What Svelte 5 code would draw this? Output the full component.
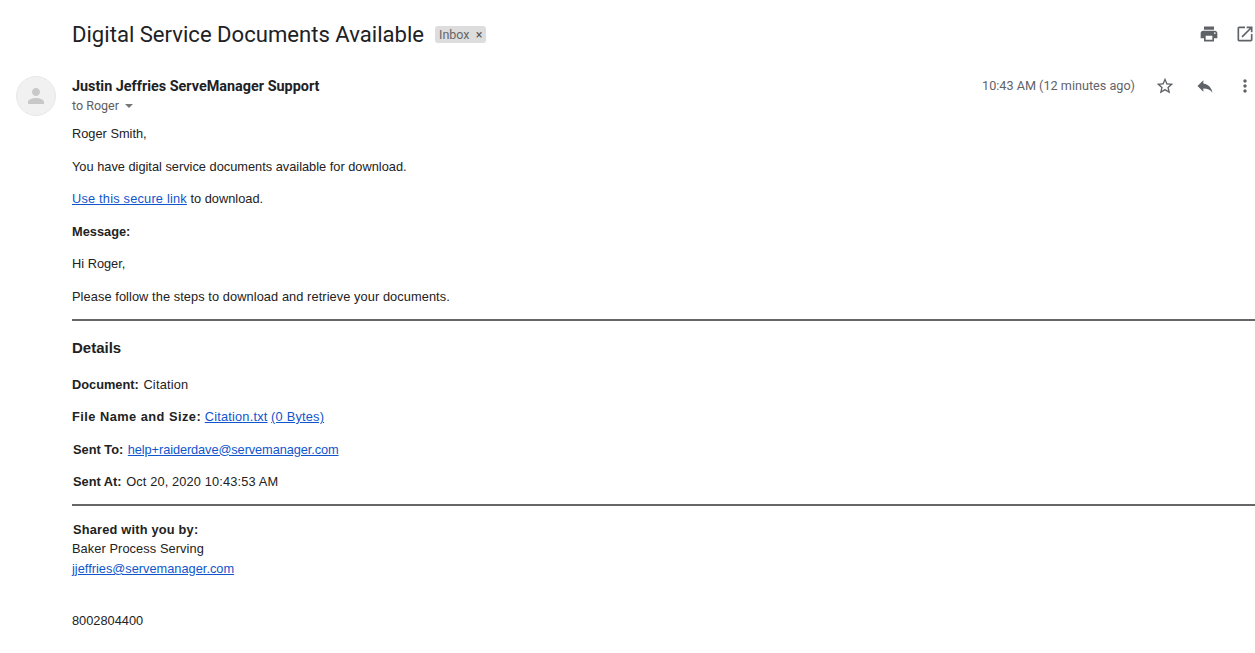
<script>
	// Gmail message view: subject row, sender row, then the HTML mail body
	const details = [
		{ label: 'Document:', text: 'Citation' }
	];
</script>

<div class="page">
	<header class="subject">
		<h1 class="title">Digital Service Documents Available</h1>
		<span class="label">Inbox <span class="x">×</span></span>
		<div class="spacer"></div>
		<svg class="icon" viewBox="0 0 24 24" width="20" height="20"><path d="M19 8H5c-1.66 0-3 1.34-3 3v6h4v4h12v-4h4v-6c0-1.66-1.34-3-3-3zm-3 11H8v-5h8v5zm3-7c-.55 0-1-.45-1-1s.45-1 1-1 1 .45 1 1-.45 1-1 1zm-1-9H6v4h12V3z" /></svg>
		<svg class="icon popout" viewBox="0 0 24 24" width="20" height="20"><path d="M19 19H5V5h7V3H5c-1.11 0-2 .9-2 2v14c0 1.1.89 2 2 2h14c1.1 0 2-.9 2-2v-7h-2v7zM14 3v2h3.59l-9.83 9.83 1.41 1.41L19 6.41V10h2V3h-7z" /></svg>
	</header>

	<div class="message">
		<div class="avatar">
			<svg viewBox="0 0 24 24" width="24" height="24"><path d="M12 12c2.21 0 4-1.79 4-4s-1.79-4-4-4-4 1.79-4 4 1.79 4 4 4zm0 2c-2.67 0-8 1.34-8 4v2h16v-2c0-2.66-5.33-4-8-4z" /></svg>
		</div>
		<div class="main">
			<div class="sender-row">
				<div class="sender">
					<div class="name">Justin Jeffries ServeManager Support</div>
					<div class="to">to Roger <span class="caret"></span></div>
				</div>
				<div class="actions">
					<span class="time">10:43 AM (12 minutes ago)</span>
					<svg class="icon star" viewBox="0 0 24 24" width="20" height="20"><path d="M22 9.24l-7.19-.62L12 2 9.19 8.63 2 9.24l5.46 4.73L5.82 21 12 17.27 18.18 21l-1.63-7.03L22 9.24zM12 15.4l-3.76 2.27 1-4.28-3.32-2.88 4.38-.38L12 6.1l1.71 4.04 4.38.38-3.32 2.88 1 4.28L12 15.4z" /></svg>
					<svg class="icon reply" viewBox="0 0 24 24" width="20" height="20"><path d="M10 9V5l-7 7 7 7v-4.1c5 0 8.5 1.6 11 5.1-1-5-4-10-11-11z" /></svg>
					<svg class="icon more" viewBox="0 0 24 24" width="20" height="20"><path d="M12 8c1.1 0 2-.9 2-2s-.9-2-2-2-2 .9-2 2 .9 2 2 2zm0 2c-1.1 0-2 .9-2 2s.9 2 2 2 2-.9 2-2-.9-2-2-2zm0 6c-1.1 0-2 .9-2 2s.9 2 2 2 2-.9 2-2-.9-2-2-2z" /></svg>
				</div>
			</div>

			<div class="body">
				<p>Roger Smith,</p>
				<p>You have digital service documents available for download.</p>
				<p><a class="wider" href="#link">Use this secure link</a> to download.</p>
				<p><strong>Message:</strong></p>
				<p>Hi Roger,</p>
				<p class="before-rule slight">Please follow the steps to download and retrieve your documents.</p>
				<hr />
				<h3>Details</h3>
				{#each details as d}
					<p class="tight"><strong class="gap">{d.label}</strong> <span class="wider">{d.text}</span></p>
				{/each}
				<p><strong class="widest">File Name and Size:</strong> <a class="wider" href="#file">Citation.txt</a> <a class="wider" href="#size">(0 Bytes)</a></p>
				<p class="nudge tight"><strong class="gap">Sent To:</strong> <a class="narrow" href="#mail">help+raiderdave@servemanager.com</a></p>
				<p class="nudge before-rule"><strong class="gap">Sent At:</strong> <span class="date">Oct 20, 2020 10:43:53 AM</span></p>
				<hr />
				<div class="shared">
					<div class="nudge"><strong class="wider">Shared with you by:</strong></div>
					<div class="slight">Baker Process Serving</div>
					<div><a href="#contact">jjeffries@servemanager.com</a></div>
				</div>
				<p class="phone">8002804400</p>
			</div>
		</div>
	</div>
</div>

<style>
	:global(body) {
		background: #fff;
		overflow: hidden;
	}
	.page {
		width: 1255px;
		height: 653px;
		overflow: hidden;
		font-family: 'Liberation Sans', Arial, sans-serif;
		color: #222;
	}
	.subject {
		display: flex;
		align-items: center;
		height: 28px;
		padding: 20px 0 0 72px;
	}
	.title {
		margin: 0;
		font-family: Roboto, sans-serif;
		font-weight: 400;
		font-size: 22.1px;
		line-height: 28px;
		color: #202124;
	}
	.label {
		margin-left: 11px;
		padding: 0 4px;
		height: 17px;
		line-height: 17px;
		border-radius: 3px;
		background: #ddd;
		font-family: Roboto, sans-serif;
		font-size: 12.5px;
		color: #666;
	}
	.x {
		margin-left: 3px;
		color: #555;
	}
	.spacer {
		flex: 1;
	}
	.icon {
		display: block;
		flex: none;
		fill: #5f6368;
	}
	.popout {
		margin: 0 0 0 16px;
	}
	.message {
		display: flex;
		margin-top: 20px;
	}
	.avatar {
		flex: none;
		width: 40px;
		height: 40px;
		margin: 8px 16px 0 16px;
		border-radius: 50%;
		background: #f1f1f1;
		border: 1px solid #e8e8e8;
		box-sizing: border-box;
		display: flex;
		align-items: center;
		justify-content: center;
	}
	.avatar svg {
		fill: #c8c8c8;
	}
	.main {
		flex: 1;
		min-width: 0;
	}
	.sender-row {
		display: flex;
		justify-content: space-between;
		padding-top: 8px;
	}
	.name {
		padding-top: 1px;
		font-family: Roboto, sans-serif;
		font-weight: 700;
		font-size: 14.4px;
		line-height: 19px;
		color: #202124;
	}
	.to {
		font-family: Roboto, sans-serif;
		font-size: 12.5px;
		line-height: 20px;
		color: #5e5e5e;
	}
	.caret {
		display: inline-block;
		margin-left: 3px;
		vertical-align: 2px;
		border-top: 4px solid #777;
		border-left: 4px solid transparent;
		border-right: 4px solid transparent;
	}
	.actions {
		display: flex;
		align-items: center;
		height: 20px;
	}
	.time {
		font-family: Roboto, sans-serif;
		font-size: 12.65px;
		color: #5f6368;
		margin: 0 20px 2px 0;
	}
	.reply {
		margin-left: 20px;
	}
	.more {
		margin-left: 20px;
	}
	.body {
		margin-top: 10px;
		font-size: 12.8px;
		line-height: 16px;
		color: #222;
	}
	p {
		margin: 0 0 16.5px;
	}
	p.tight {
		margin-bottom: 16px;
	}
	p.before-rule {
		margin-bottom: 14.5px;
	}
	hr {
		margin: 0;
		border: none;
		height: 2px;
		background: #666;
	}
	h3 {
		margin: 19px 0 21px;
		font-size: 15px;
		line-height: 16px;
		font-weight: 700;
	}
	a {
		color: #15c;
		text-decoration: underline;
	}
	/* the source was hinted wider than Liberation renders here */
	.slight {
		letter-spacing: 0.08px;
	}
	.wider {
		letter-spacing: 0.2px;
	}
	.widest {
		letter-spacing: 0.47px;
	}
	.narrow {
		letter-spacing: -0.1px;
	}
	.date {
		letter-spacing: 0.14px;
	}
	.gap {
		margin-right: 1px;
	}
	.nudge {
		padding-left: 1px;
	}
	.shared {
		margin-top: 14px;
		line-height: 19.4px;
	}
	.phone {
		margin: 34.3px 0 0;
	}
</style>
